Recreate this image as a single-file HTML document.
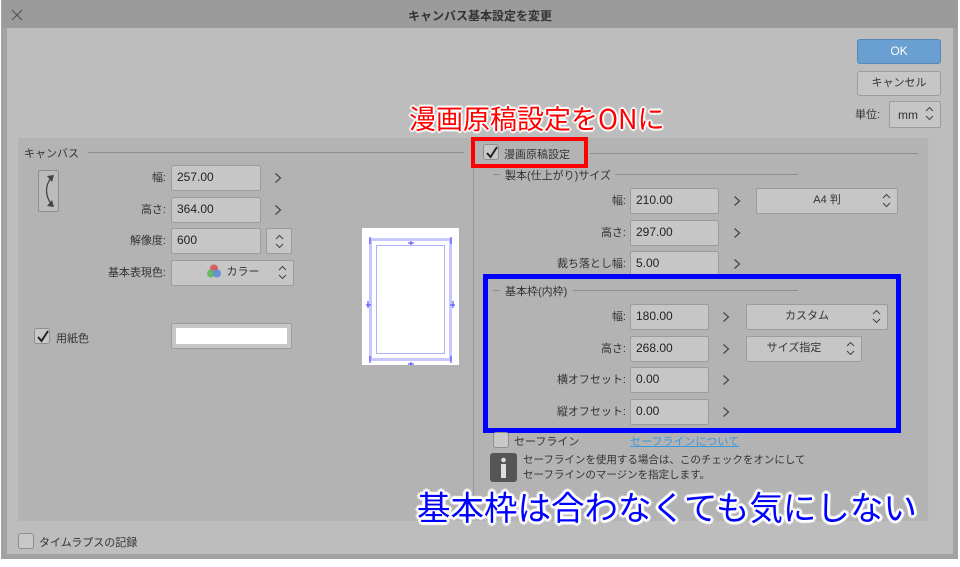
<!DOCTYPE html>
<html><head><meta charset="utf-8"><style>
*{margin:0;padding:0;box-sizing:border-box}
body{width:960px;height:567px;background:#fff;position:relative;overflow:hidden;font-family:"Liberation Sans","Noto Sans CJK JP",sans-serif;color:#333;font-size:11px}
.a{position:absolute}
.inp{position:absolute;background:#c6c6c6;border:1px solid #9c9c9c;border-radius:2px;font-size:12px;padding-left:5px;line-height:23px;color:#222}
.lbl{position:absolute;text-align:right;font-size:11px;color:#333;line-height:14px}
.gt{position:absolute;width:8px;height:12px}
.dd{position:absolute;background:#c6c6c6;border:1px solid #9c9c9c;border-radius:2px;font-size:11px;text-align:center;line-height:23px;color:#333}
.sp{position:absolute;right:6px;top:3px;width:9px;height:17px}
.cb{position:absolute;width:16px;height:16px;border:1px solid #8e8e8e;border-radius:3px;background:#c8c8c8}
.hl{position:absolute;height:1px;background:#8e8e8e}
.ann{position:absolute;white-space:nowrap;font-family:"Noto Sans CJK JP",sans-serif}
</style></head><body>
<svg width="0" height="0" style="position:absolute"><defs><symbol id="g" viewBox="0 0 8 12"><path d="M1.5 1.5L6.5 6L1.5 10.5" stroke="#444" stroke-width="1.2" fill="none"/></symbol></defs></svg>
<div class="a" style="left:1px;top:0;width:957px;height:559px;background:#a2a2a2"></div>
<div class="a" style="left:2px;top:0;width:955px;height:28px;background:#9b9b9b"></div>
<div class="a" style="left:7px;top:28px;width:946px;height:526px;background:#bdbdbd"></div>
<svg class="a" style="left:11px;top:9px" width="12" height="12"><path d="M1 1L11 11M11 1L1 11" stroke="#555" stroke-width="1.2"/></svg>
<div class="a" style="left:0;width:960px;top:7px;text-align:center;font-size:12px;font-weight:bold;color:#333">キャンバス基本設定を変更</div>

<div class="a" style="left:857px;top:39px;width:84px;height:25px;background:#6a9fd1;border:1px solid #5a88b6;border-radius:3px;color:#fff;text-align:center;line-height:23px;font-size:12px">OK</div>
<div class="a" style="left:857px;top:71px;width:84px;height:25px;background:#c6c6c6;border:1px solid #9c9c9c;border-radius:3px;text-align:center;line-height:23px;font-size:11px">キャンセル</div>
<div class="lbl" style="left:855px;top:108px">単位:</div>
<div class="dd" style="left:889px;top:101px;width:52px;height:27px;text-align:left;padding-left:8px;line-height:26px;font-size:12px">mm<svg class="sp" viewBox="0 0 9 17"><path d="M1 6L4.5 2.5L8 6M1 11L4.5 14.5L8 11" stroke="#444" fill="none"/></svg></div>

<div class="a" style="left:18px;top:138px;width:922px;height:383px;background:#b3b3b3"></div>
<div class="a" style="left:928px;top:138px;width:12px;height:383px;background:#bcbcbc"></div>
<div class="a" style="left:24px;top:145px;font-size:11px">キャンバス</div>
<div class="hl" style="left:88px;top:152px;width:376px"></div>
<div class="a" style="left:38px;top:170px;width:21px;height:42px;border:1px solid #8e8e8e;border-radius:2px;background:#bbb"></div>
<svg class="a" style="left:38px;top:170px" width="21" height="42"><path d="M13 8Q4 20 13 34" stroke="#444" fill="none" stroke-width="1.3"/><path d="M9 6L16 5L14 12Z M9 36L16 37L14 30Z" fill="#444"/></svg>

<div class="lbl" style="left:100px;width:66px;top:171px">幅:</div>
<div class="inp" style="left:171px;top:165px;width:90px;height:26px">257.00</div>
<svg class="gt" style="left:274px;top:172px"><use href="#g"/></svg>
<div class="lbl" style="left:100px;width:66px;top:203px">高さ:</div>
<div class="inp" style="left:171px;top:197px;width:90px;height:26px">364.00</div>
<svg class="gt" style="left:274px;top:204px"><use href="#g"/></svg>
<div class="lbl" style="left:100px;width:66px;top:234px">解像度:</div>
<div class="inp" style="left:171px;top:228px;width:90px;height:26px">600</div>
<div class="dd" style="left:266px;top:228px;width:26px;height:26px"><svg class="sp" style="right:7px;top:4px" viewBox="0 0 9 17"><path d="M1 6L4.5 2.5L8 6M1 11L4.5 14.5L8 11" stroke="#444" fill="none"/></svg></div>
<div class="lbl" style="left:90px;width:76px;top:266px">基本表現色:</div>
<div class="dd" style="left:171px;top:260px;width:123px;height:26px"><span style="display:inline-block;width:18px"><svg width="16" height="14" style="vertical-align:-3px"><circle cx="8" cy="4.5" r="4" fill="#d86060"/><circle cx="5" cy="9.5" r="4" fill="#5cb85c" opacity=".9"/><circle cx="11" cy="9.5" r="4" fill="#5b8fd8" opacity=".9"/></svg></span> カラー<svg class="sp" viewBox="0 0 9 17"><path d="M1 6L4.5 2.5L8 6M1 11L4.5 14.5L8 11" stroke="#444" fill="none"/></svg></div>

<div class="cb" style="left:34px;top:328px"></div>
<svg class="a" style="left:35px;top:329px" width="16" height="16"><path d="M3 8L6.5 12L13 2" stroke="#222" stroke-width="2" fill="none"/></svg>
<div class="a" style="left:56px;top:330px">用紙色</div>
<div class="a" style="left:171px;top:323px;width:121px;height:26px;background:#c6c6c6;border:1px solid #9c9c9c;border-radius:2px"></div>
<div class="a" style="left:176px;top:328px;width:111px;height:16px;background:#fff"></div>

<div class="a" style="left:362px;top:228px;width:97px;height:137px;background:#fff"></div>
<svg class="a" style="left:362px;top:228px" width="97" height="137">
<rect x="8.5" y="11.5" width="80" height="120" fill="none" stroke="#c8c8ff" stroke-width="3"/>
<rect x="14.5" y="17.5" width="68" height="108" fill="none" stroke="#aab0ff" stroke-width="1"/>
<g stroke="#3b3bff" stroke-width="1"><path d="M49 13V17M46 15H52M49 134V138M46 136H52M6 73V80M4 77H9M91 73V80M88 77H93M8 9V16M89 9V16M8 128V135M89 128V135"/></g>
</svg>
<div class="cb" style="left:18px;top:533px;background:#c8c8c8"></div>
<div class="a" style="left:39px;top:534px">タイムラプスの記録</div>

<div class="a" style="left:473px;top:166px;width:1px;height:355px;background:#9a9a9a"></div>
<div class="hl" style="left:590px;top:153px;width:328px"></div>
<div class="cb" style="left:483px;top:144px"></div>
<svg class="a" style="left:484px;top:145px" width="16" height="16"><path d="M3 8L6.5 12L13 2" stroke="#222" stroke-width="2" fill="none"/></svg>
<div class="a" style="left:504px;top:146px">漫画原稿設定</div>
<div class="a" style="left:471px;top:137px;width:117px;height:31px;border:4px solid #f00"></div>

<div class="hl" style="left:493px;top:174px;width:7px"></div>
<div class="a" style="left:505px;top:167px">製本(仕上がり)サイズ</div>
<div class="hl" style="left:615px;top:174px;width:183px"></div>
<div class="lbl" style="left:540px;width:86px;top:194px">幅:</div>
<div class="inp" style="left:630px;top:188px;width:89px;height:26px">210.00</div>
<svg class="gt" style="left:733px;top:195px"><use href="#g"/></svg>
<div class="dd" style="left:756px;top:188px;width:142px;height:26px">A4 判<svg class="sp" viewBox="0 0 9 17"><path d="M1 6L4.5 2.5L8 6M1 11L4.5 14.5L8 11" stroke="#444" fill="none"/></svg></div>
<div class="lbl" style="left:540px;width:86px;top:226px">高さ:</div>
<div class="inp" style="left:630px;top:220px;width:89px;height:26px">297.00</div>
<svg class="gt" style="left:733px;top:227px"><use href="#g"/></svg>
<div class="lbl" style="left:540px;width:86px;top:257px">裁ち落とし幅:</div>
<div class="inp" style="left:630px;top:251px;width:89px;height:26px">5.00</div>
<svg class="gt" style="left:733px;top:258px"><use href="#g"/></svg>

<div class="hl" style="left:493px;top:290px;width:7px"></div>
<div class="a" style="left:505px;top:283px">基本枠(内枠)</div>
<div class="hl" style="left:573px;top:290px;width:225px"></div>
<div class="lbl" style="left:540px;width:86px;top:310px">幅:</div>
<div class="inp" style="left:630px;top:304px;width:79px;height:26px">180.00</div>
<svg class="gt" style="left:722px;top:311px"><use href="#g"/></svg>
<div class="dd" style="left:746px;top:304px;width:142px;height:26px;padding-right:20px">カスタム<svg class="sp" viewBox="0 0 9 17"><path d="M1 6L4.5 2.5L8 6M1 11L4.5 14.5L8 11" stroke="#444" fill="none"/></svg></div>
<div class="lbl" style="left:540px;width:86px;top:342px">高さ:</div>
<div class="inp" style="left:630px;top:336px;width:79px;height:26px">268.00</div>
<svg class="gt" style="left:722px;top:343px"><use href="#g"/></svg>
<div class="dd" style="left:746px;top:336px;width:116px;height:26px;padding-right:20px">サイズ指定<svg class="sp" viewBox="0 0 9 17"><path d="M1 6L4.5 2.5L8 6M1 11L4.5 14.5L8 11" stroke="#444" fill="none"/></svg></div>
<div class="lbl" style="left:540px;width:86px;top:373px">横オフセット:</div>
<div class="inp" style="left:630px;top:367px;width:79px;height:26px">0.00</div>
<svg class="gt" style="left:722px;top:374px"><use href="#g"/></svg>
<div class="lbl" style="left:540px;width:86px;top:405px">縦オフセット:</div>
<div class="inp" style="left:630px;top:399px;width:79px;height:26px">0.00</div>
<svg class="gt" style="left:722px;top:406px"><use href="#g"/></svg>
<div class="a" style="left:483px;top:274px;width:418px;height:159px;border:5px solid #00f"></div>

<div class="cb" style="left:493px;top:432px"></div>
<div class="a" style="left:514px;top:433px">セーフライン</div>
<div class="a" style="left:630px;top:433px;color:#3a98db;text-decoration:underline">セーフラインについて</div>
<div class="a" style="left:490px;top:453px;width:27px;height:29px;background:#555;border-radius:3px"></div>
<svg class="a" style="left:490px;top:453px" width="27" height="29"><circle cx="13.5" cy="7" r="2.3" fill="#ddd"/><rect x="11" y="11" width="5" height="14" fill="#ddd"/></svg>
<div class="a" style="left:523px;top:453px;line-height:15px;font-size:10.5px">セーフラインを使用する場合は、このチェックをオンにして<br>セーフラインのマージンを指定します。</div>

<div class="ann" style="left:409px;top:98px;font-size:27px;color:#f00;text-shadow:0 0 2px #fff,1px 1px 1px #fff,-1px -1px 1px #fff,1px -1px 1px #fff,-1px 1px 1px #fff,2px 0 1px #fff,-2px 0 1px #fff,0 2px 1px #fff,0 -2px 1px #fff">漫画原稿設定をONに</div>
<div class="ann" style="left:417px;top:481px;font-size:33.5px;color:#00f;text-shadow:0 0 2px #fff,2px 2px 1px #fff,-2px -2px 1px #fff,2px -2px 1px #fff,-2px 2px 1px #fff,3px 0 1px #fff,-3px 0 1px #fff,0 3px 1px #fff,0 -3px 1px #fff">基本枠は合わなくても気にしない</div>
</body></html>
